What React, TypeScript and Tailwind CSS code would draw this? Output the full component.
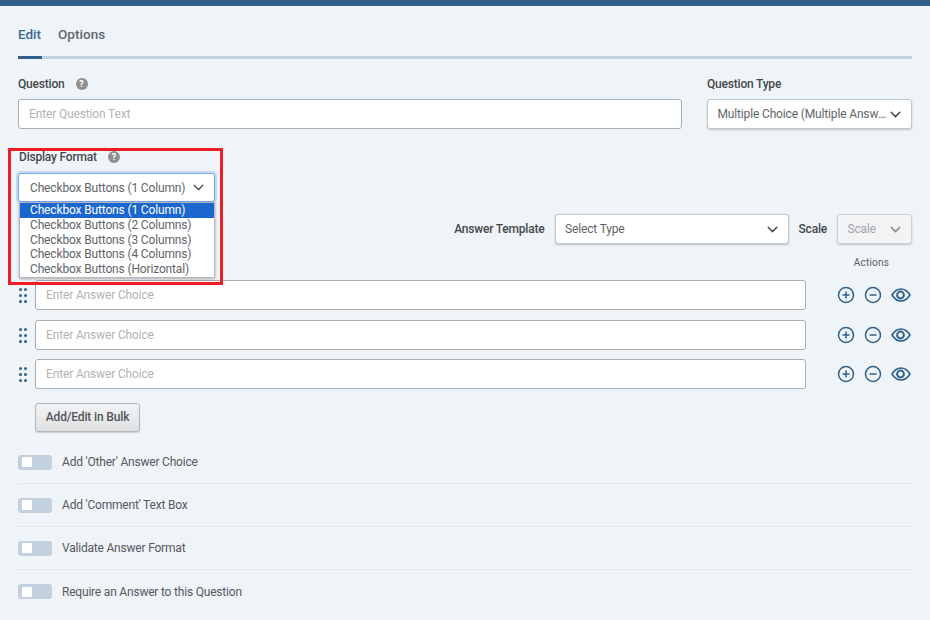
import { ChevronDown, MinusCircle, PlusCircle } from "lucide-react";

const font = "font-['Roboto','Liberation_Sans',sans-serif]";

function Help() {
  return (
    <span className="flex h-3 w-3 items-center justify-center rounded-full bg-[#8f8f8f] text-[9px] font-bold leading-none text-white">
      ?
    </span>
  );
}

function SelectBox({ label, className, disabled }: { label: string; className: string; disabled?: boolean }) {
  return (
    <div
      className={`flex h-[30px] items-center justify-between rounded-[3px] border pl-[9.500px] pr-[7px] text-[12px] tracking-[-0.15px] shadow-[0_1px_2px_rgba(0,0,0,0.2)] ${
        disabled ? "border-[#cfd3d6] bg-[#f1f3f5] text-[#a3a6a9]" : "border-[#c4c7ca] bg-white text-[#5f6468]"
      } ${className}`}
    >
      <span className="truncate">{label}</span>
      <ChevronDown className={`h-[17px] w-[17px] shrink-0 ${disabled ? "text-[#8b8f92]" : "text-[#4b5054]"}`} strokeWidth={2} />
    </div>
  );
}

function DragDots() {
  return (
    <div className="grid w-[8px] grid-cols-2 gap-x-[2px] gap-y-[3px]">
      {[1, 2, 3, 4, 5, 6].map((i) => (
        <span key={i} className="h-[3px] w-[3px] rounded-full bg-[#2f6089]" />
      ))}
    </div>
  );
}

function EyeIcon() {
  return (
    <svg viewBox="0 0 20 14" className="ml-[9px] h-[14px] w-[20px]" fill="none" stroke="currentColor">
      <path d="M1 7C3.500 3 6.500 1 10 1s6.500 2 9 6c-2.500 4-5.500 6-9 6s-6.500-2-9-6Z" strokeWidth="1.6" />
      <circle cx="9.500" cy="7" r="3.400" strokeWidth="2" />
    </svg>
  );
}

function AnswerRow({ className }: { className: string }) {
  return (
    <div className={`flex h-[30px] items-center ${className}`}>
      <div className="ml-[1px] w-[16px]">
        <DragDots />
      </div>
      <div className="flex h-[30px] w-[771px] items-center rounded-[3px] border border-[#a9adb0] bg-white pb-[1px] pl-[10px] text-[12px] tracking-[-0.15px] text-[#b0b3b6]">
        Enter Answer Choice
      </div>
      <div className="ml-[31px] flex items-center text-[#2f6089]">
        <PlusCircle className="h-[18px] w-[18px]" strokeWidth={2} />
        <MinusCircle className="ml-[9px] h-[18px] w-[18px]" strokeWidth={2} />
        <EyeIcon />
      </div>
    </div>
  );
}

function ToggleRow({ label, divider }: { label: string; divider?: boolean }) {
  return (
    <div className={`flex h-[43px] items-center ${divider ? "border-b border-[#e2e6ea]" : ""}`}>
      <div className="flex h-[15px] w-[34px] items-center rounded-[3px] bg-[#c3d0dd] pl-[4px]">
        <span className="h-[10px] w-[10px] rounded-[1px] bg-white" />
      </div>
      <span className="ml-[10px] text-[12px] tracking-[-0.2px] text-[#55595d]">{label}</span>
    </div>
  );
}

const options = [
  "Checkbox Buttons (1 Column)",
  "Checkbox Buttons (2 Columns)",
  "Checkbox Buttons (3 Columns)",
  "Checkbox Buttons (4 Columns)",
  "Checkbox Buttons (Horizontal)",
];

export default function App() {
  return (
    <div className={`relative h-[620px] w-[930px] overflow-hidden bg-[#eff4f9] ${font}`}>
      <div className="h-[6px] bg-[#2f5f87]" />

      <div className="pl-[18px] pr-[18px]">
        {/* Tabs */}
        <div className="flex h-[53px] items-end border-b-[3px] border-[#c3d0dd]">
          <div className="relative -mb-[3px] h-[35px] w-[24px] border-b-[3px] border-[#2f6089] text-[13.5px] leading-[20px] font-medium text-[#3a6c96]">
            Edit
          </div>
          <div className="ml-[16px] h-[32px] text-[13.5px] leading-[20px] font-medium tracking-[0.05px] text-[#63686c]">Options</div>
        </div>

        {/* Question */}
        <div className="mt-[17px] flex justify-between">
          <div className="w-[664px]">
            <div className="flex h-[16px] items-center gap-[11px] text-[12px] font-medium tracking-[-0.2px] text-[#44484c]">
              Question <Help />
            </div>
            <div className="mt-[7px] flex h-[30px] items-center rounded-[3px] border border-[#a9adb0] bg-white pb-[1px] pl-[10px] text-[12px] tracking-[-0.15px] text-[#b0b3b6]">
              Enter Question Text
            </div>
          </div>
          <div className="w-[205px]">
            <div className="flex h-[16px] items-center text-[12px] font-medium tracking-[-0.2px] text-[#44484c]">
              Question Type
            </div>
            <SelectBox label="Multiple Choice (Multiple Answers)" className="mt-[7px] w-full" />
          </div>
        </div>

        {/* Display Format */}
        <div className="mt-[20px] flex h-[16px] items-center gap-[11px] pl-[1px] text-[12px] font-medium tracking-[-0.2px] text-[#44484c]">
          Display Format <Help />
        </div>
        <div className="mt-[8px] flex h-[29px] w-[197px] items-center justify-between rounded-[3px] border border-[#7aa7ea] bg-white pl-[11px] pr-[7px] text-[12px] tracking-[-0.15px] text-[#5f6468] shadow-[0_0_0_2px_rgba(122,167,234,0.35)]">
          Checkbox Buttons (1 Column)
          <ChevronDown className="h-[17px] w-[17px]" strokeWidth={2} />
        </div>

        {/* Answer template */}
        <div className="mt-[12px] flex items-center justify-end">
          <span className="text-[12px] font-medium tracking-[-0.2px] text-[#44484c]">Answer Template</span>
          <SelectBox label="Select Type" className="ml-[10px] w-[234px]" />
          <span className="ml-[10px] text-[12px] font-medium tracking-[-0.2px] text-[#44484c]">Scale</span>
          <SelectBox label="Scale" className="ml-[10px] w-[75px]" disabled />
        </div>

        <div className="mt-[11px] flex h-[14px] items-center justify-end pr-[23px] text-[10px] tracking-[0.2px] text-[#5a5f63]">
          Actions
        </div>

        {/* Answers */}
        <AnswerRow className="mt-[11px]" />
        <AnswerRow className="mt-[10px]" />
        <AnswerRow className="mt-[9px]" />

        <button className="ml-[17px] mt-[14px] flex h-[29px] w-[105px] items-center justify-center rounded-[3px] border border-[#b4b7ba] bg-gradient-to-b from-[#f2f3f4] to-[#dfe0e2] pb-[1px] text-[12px] font-medium tracking-[-0.15px] text-[#53575b] shadow-[0_1px_1px_rgba(0,0,0,0.15)]">
          Add/Edit in Bulk
        </button>

        {/* Toggles */}
        <div className="mt-[9px]">
          <ToggleRow label="Add 'Other' Answer Choice" divider />
          <ToggleRow label="Add 'Comment' Text Box" divider />
          <ToggleRow label="Validate Answer Format" divider />
          <ToggleRow label="Require an Answer to this Question" />
        </div>
      </div>

      {/* Open dropdown list */}
      <div className="absolute left-[19px] top-[202px] w-[196px] border border-[#b5b8bb] bg-white text-[12px] leading-[14.75px] tracking-[-0.15px] text-[#5f6468] shadow-[0_1px_3px_rgba(0,0,0,0.3)]">
        {options.map((o, i) => (
          <div key={o} className={`pl-[10px] ${i === 0 ? "bg-[#1c66cf] text-white" : ""}`}>
            {o}
          </div>
        ))}
      </div>

      {/* Red annotation box */}
      <div className="pointer-events-none absolute left-[8px] top-[148px] h-[137px] w-[215px] border-[3px] border-[#ee1c25]" />
    </div>
  );
}
